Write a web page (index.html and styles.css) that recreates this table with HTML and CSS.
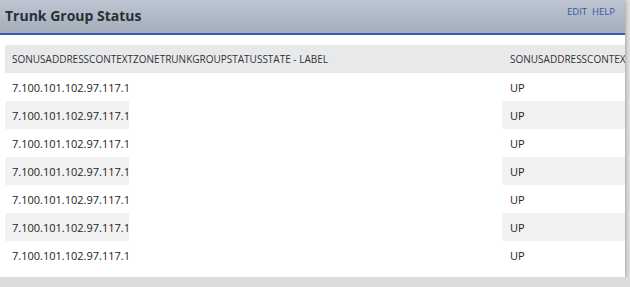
FILE: index.html
```html
<!DOCTYPE html>
<html>
<head>
<meta charset="utf-8">
<title>Trunk Group Status</title>
<link rel="stylesheet" href="styles.css">
</head>
<body>
<div class="panel">
  <div class="panel-head">
    <h1 class="panel-title">Trunk Group Status</h1>
    <div class="panel-actions"><a class="action">EDIT</a><a class="action">HELP</a></div>
  </div>
  <div class="panel-body">
    <div class="grid">
      <div class="row head">
        <div class="cell label"><span class="clip">SONUSADDRESSCONTEXTZONETRUNKGROUPSTATUSSTATE - LABEL</span></div>
        <div class="cell state">SONUSADDRESSCONTEXTZONETRUNKGROUPSTATUSSTATE</div>
      </div>
      <div class="row"><div class="cell label"><span class="clip">7.100.101.102.97.117.108.116</span></div><div class="cell state">UP</div></div>
      <div class="row odd"><div class="cell label"><span class="clip">7.100.101.102.97.117.108.116</span></div><div class="cell state">UP</div></div>
      <div class="row"><div class="cell label"><span class="clip">7.100.101.102.97.117.108.116</span></div><div class="cell state">UP</div></div>
      <div class="row odd"><div class="cell label"><span class="clip">7.100.101.102.97.117.108.116</span></div><div class="cell state">UP</div></div>
      <div class="row"><div class="cell label"><span class="clip">7.100.101.102.97.117.108.116</span></div><div class="cell state">UP</div></div>
      <div class="row odd"><div class="cell label"><span class="clip">7.100.101.102.97.117.108.116</span></div><div class="cell state">UP</div></div>
      <div class="row"><div class="cell label"><span class="clip">7.100.101.102.97.117.108.116</span></div><div class="cell state">UP</div></div>
    </div>
  </div>
</div>
</body>
</html>
```

FILE: styles.css
```css
html, body {
  margin: 0;
  padding: 0;
  background: #dcdcdc;
  font-family: "Open Sans", "DejaVu Sans", sans-serif;
  color: #222;
}

.panel {
  width: 625px;
  height: 277px;
  background: #fff;
  box-shadow: 1px 1px 3px rgba(0, 0, 0, 0.25);
  overflow: hidden;
}

.panel-head {
  height: 33px;
  border-bottom: 2px solid #2f5fb5;
  background: linear-gradient(#bcc5d1, #a4aebb);
  display: flex;
  justify-content: space-between;
  align-items: flex-start;
  padding: 0 10px 0 5px;
}

.panel-title {
  margin: 0;
  font-size: 14px;
  font-weight: 700;
  line-height: 31px;
  color: #2b2e33;
}

.panel-actions {
  display: flex;
  gap: 5px;
  padding-top: 6px;
  font-size: 9.5px;
  line-height: 12px;
}

.action {
  color: #3557a6;
}

.panel-body {
  padding: 10px 0 0 5px;
}

.grid {
  width: 620px;
  font-size: 11px;
}

.row {
  display: grid;
  grid-template-columns: 497px 1fr;
  height: 28px;
}

.row.head {
  background: #e8e9eb;
  color: #333;
  font-size: 10px;
}

.cell {
  display: flex;
  align-items: center;
  white-space: nowrap;
  overflow: hidden;
}

.cell.label .clip {
  display: flex;
  align-items: center;
  height: 100%;
  padding-left: 7px;
}

/* data cells show only the leading part of the index */
.row:not(.head) .cell.label .clip {
  width: 117px;
  overflow: hidden;
}

.cell.state {
  padding-left: 8px;
}

.row.odd .cell.label .clip,
.row.odd .cell.state {
  background: #f2f2f2;
}
```
